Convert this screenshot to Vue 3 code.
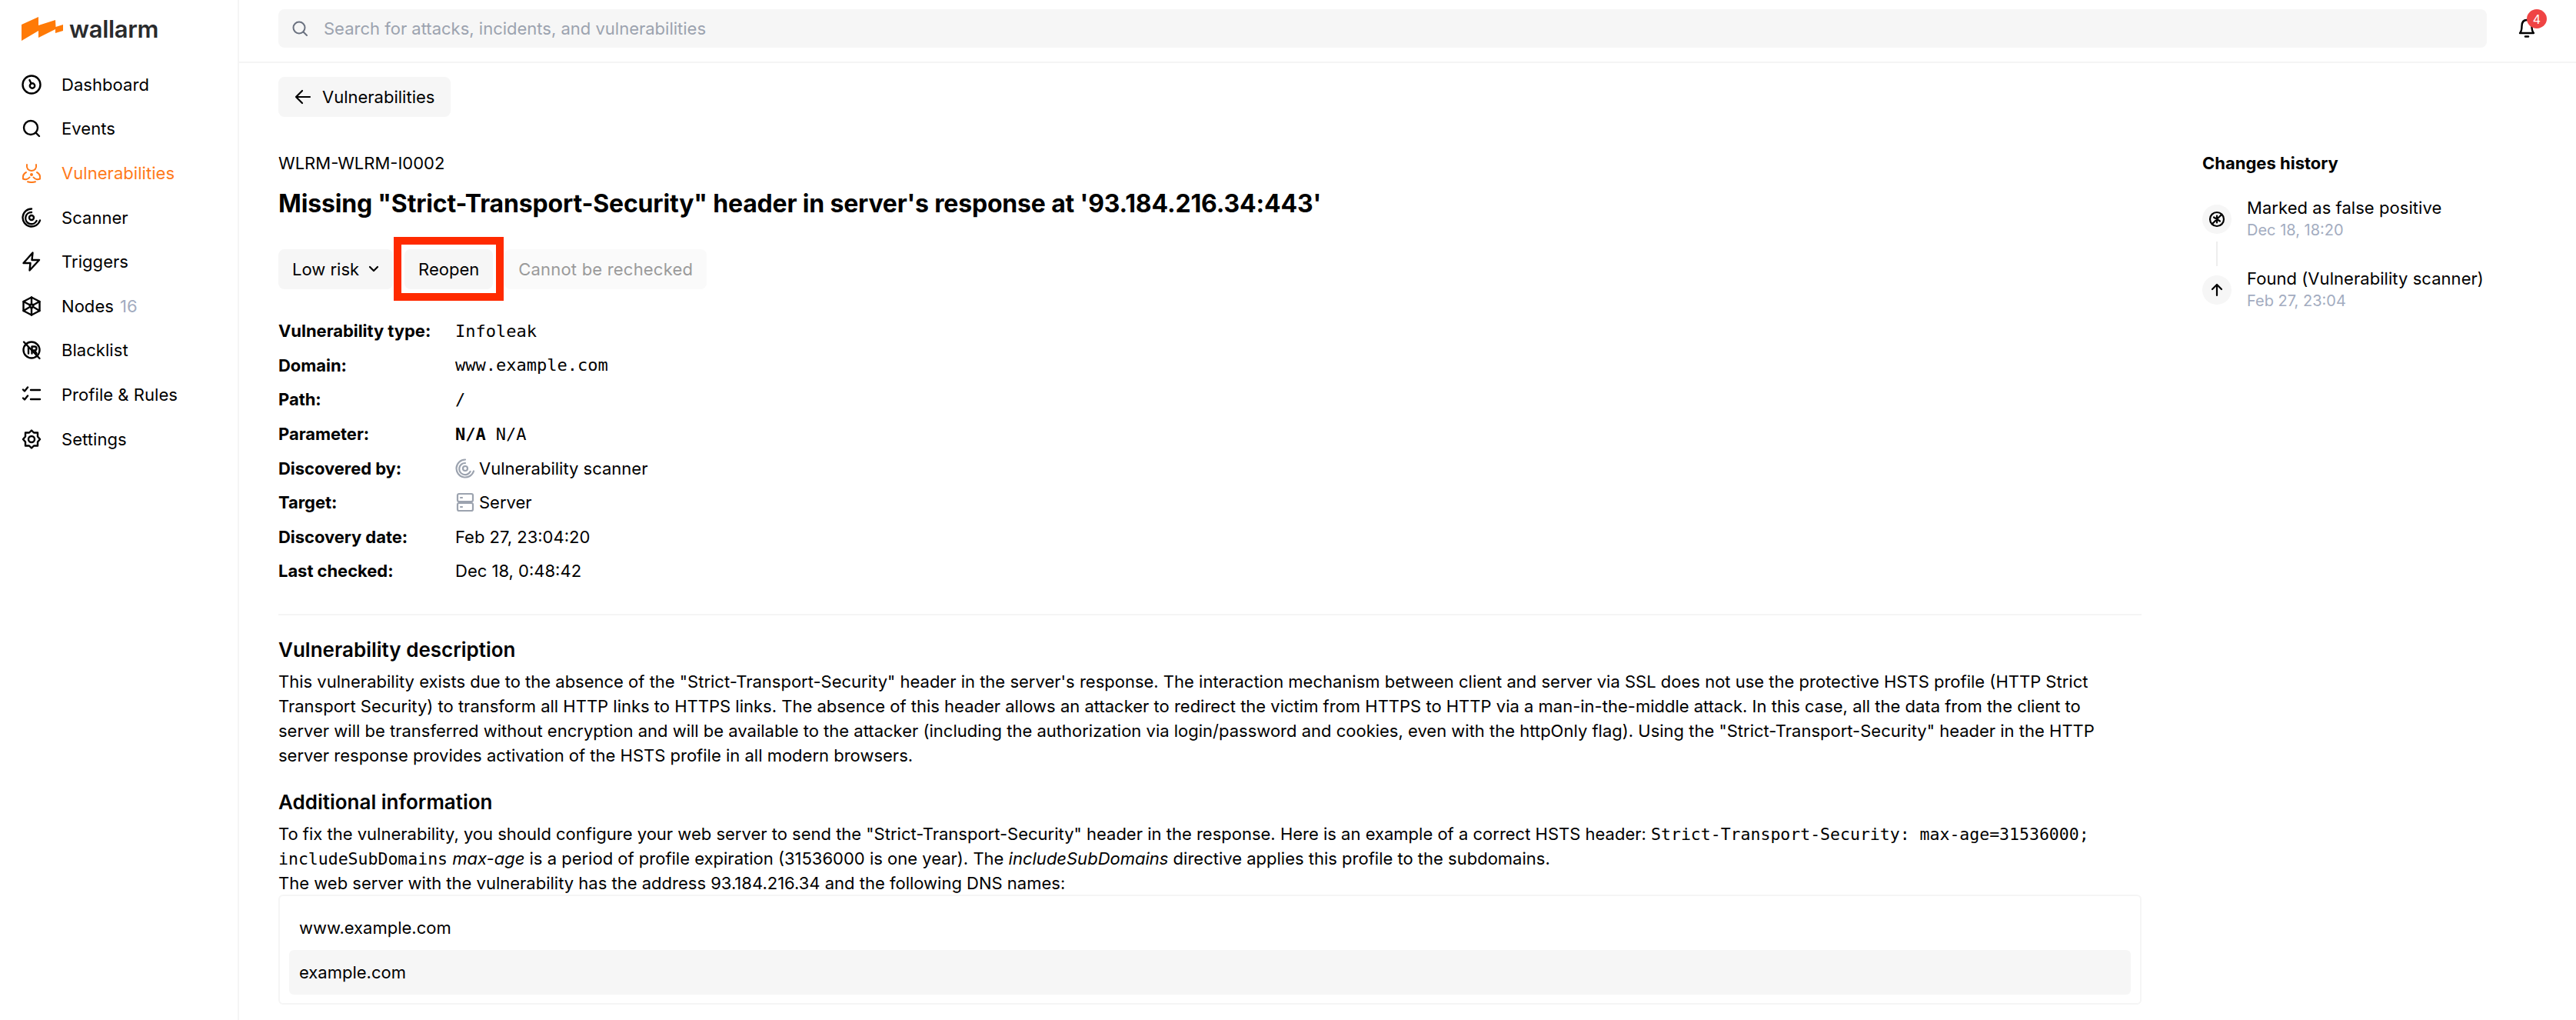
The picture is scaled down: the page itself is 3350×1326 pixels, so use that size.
<script setup>
const navItems = [
  { name: 'Dashboard', icon: 'dashboard' },
  { name: 'Events', icon: 'events' },
  { name: 'Vulnerabilities', icon: 'vuln', active: true },
  { name: 'Scanner', icon: 'scanner' },
  { name: 'Triggers', icon: 'triggers' },
  { name: 'Nodes', icon: 'nodes', count: 16 },
  { name: 'Blacklist', icon: 'blacklist' },
  { name: 'Profile & Rules', icon: 'profile' },
  { name: 'Settings', icon: 'settings' }
]
</script>

<template>
  <div class="page">
    <aside class="sidebar">
      <div class="logo">
        <svg width="56" height="34" viewBox="28 21 56 34">
          <polygon fill="#ff7a06" points="28,32 50,22 50,33 72,26 72.5,35 82,32 82,40 72,43 72,38 50,49 50,40 28,53" />
        </svg>
        <span class="logo-text">wallarm</span>
      </div>
      <nav>
        <a v-for="item in navItems" :key="item.name" class="nav-item" :class="{ active: item.active }">
          <svg class="nav-icon" width="26" height="26" viewBox="0 0 26 26" fill="none" stroke="currentColor" :stroke-width="item.icon === 'vuln' ? 2 : 2.4" stroke-linecap="round" stroke-linejoin="round">
            <template v-if="item.icon === 'dashboard'">
              <circle cx="13" cy="13" r="11.5" />
              <circle cx="14" cy="14.5" r="3.2" />
              <path d="M12.6 11.6 10.4 7" />
            </template>
            <template v-else-if="item.icon === 'events'">
              <circle cx="12" cy="12" r="9" />
              <path d="M18.6 18.6 23 23" />
            </template>
            <template v-else-if="item.icon === 'vuln'">
              <circle cx="13" cy="15" r="1" />
              <path d="M7 2C6 7 9 10 13 10S20 7 19 2" />
              <path d="M6 12C3 13.500 1.500 17 2 20.500c3 1.500 6.500.5 8.500-2" />
              <path d="M20 12c3 1.500 4.500 5 4 8.500-3 1.500-6.500.5-8.500-2" />
              <path d="M8 24.200c3 1 7 1 10 0" />
            </template>
            <template v-else-if="item.icon === 'scanner'">
              <path d="M24 16.5A11.5 11.5 0 1 1 13 1.5" />
              <path d="M19.6 17A7.6 7.6 0 1 1 13 6" />
              <circle cx="13" cy="13" r="3" />
            </template>
            <template v-else-if="item.icon === 'triggers'">
              <path d="M14.5 1.5 2.5 15h9l-1 9.5L23 11h-9.5z" />
            </template>
            <template v-else-if="item.icon === 'nodes'">
              <path d="M13 1.5 23.5 7v12L13 24.5 2.5 19V7z" />
              <path d="M13 1.5v8M13 16.5v8M2.5 7 10 11M23.5 7 16 11M2.5 19l7.5-4.5M23.5 19 16 14.5M10 11l3 5.5 3-5.500z" />
            </template>
            <template v-else-if="item.icon === 'blacklist'">
              <circle cx="13" cy="13" r="10.5" />
              <path d="M3 2.500 23.500 24" />
              <path d="M9 9.500v8M13.500 17.500V8.500h3.500a2.500 2.500 0 0 1 0 5h-3.500M17 13.500l2.500 4" />
            </template>
            <template v-else-if="item.icon === 'profile'">
              <path d="M2 6.500 4 8.500 8 3.500M2 17.500l2 2 4-5M12 7h12M12 19h12" />
            </template>
            <template v-else>
              <path d="M13 1.500 16 4.500h5v5l3 3.500-3 3.500v5h-5l-3 3-3-3H5v-5L2 13l3-3.500v-5h5z" />
              <circle cx="13" cy="13" r="4" />
            </template>
          </svg>
          <span>{{ item.name }}</span>
          <span v-if="item.count" class="nav-count">{{ item.count }}</span>
        </a>
      </nav>
    </aside>

    <div class="main">
      <header class="topbar">
        <div class="search">
          <svg width="24" height="24" viewBox="0 0 24 24" fill="none" stroke="#6b7280" stroke-width="2" stroke-linecap="round">
            <circle cx="11" cy="11" r="7.500" />
            <path d="M16.500 16.500 21 21" />
          </svg>
          <span>Search for attacks, incidents, and vulnerabilities</span>
        </div>
        <div class="bell">
          <svg width="24" height="26" viewBox="0 0 24 26" fill="none" stroke="#000" stroke-width="2.400" stroke-linecap="round" stroke-linejoin="round">
            <path d="M3 19c2-2 2.500-4 2.500-9 0-5 2.500-8 6.500-8s6.500 3 6.500 8c0 5 .5 7 2.500 9z" />
            <path d="M10 23.500h4" />
          </svg>
          <span class="badge">4</span>
        </div>
      </header>

      <div class="content">
        <section class="detail">
          <button class="btn back-btn">
            <svg width="22" height="22" viewBox="0 0 22 22" fill="none" stroke="#000" stroke-width="2.200" stroke-linecap="round" stroke-linejoin="round">
              <path d="M20 11H2M10 3l-8 8 8 8" />
            </svg>
            Vulnerabilities
          </button>

          <div class="vuln-id">WLRM-WLRM-I0002</div>
          <h1 class="title">Missing "Strict-Transport-Security" header in server's response at '93.184.216.34:443'</h1>

          <div class="actions">
            <button class="btn">
              Low risk
              <svg width="14" height="10" viewBox="0 0 14 10" fill="none" stroke="#000" stroke-width="2.200" stroke-linecap="round" stroke-linejoin="round">
                <path d="M2 2l5 5 5-5" />
              </svg>
            </button>
            <div class="highlighted">
              <button class="btn">Reopen</button>
              <span class="red-frame"></span>
            </div>
            <button class="btn disabled">Cannot be rechecked</button>
          </div>

          <dl class="facts">
            <dt>Vulnerability type:</dt>
            <dd class="mono">Infoleak</dd>
            <dt>Domain:</dt>
            <dd class="mono">www.example.com</dd>
            <dt>Path:</dt>
            <dd class="mono">/</dd>
            <dt>Parameter:</dt>
            <dd class="mono"><b>N/A</b> N/A</dd>
            <dt>Discovered by:</dt>
            <dd>
              <svg width="26" height="26" viewBox="0 0 26 26" fill="none" stroke="#9ca3af" stroke-width="2.200" stroke-linecap="round">
                <path d="M24 16.500A11.500 11.500 0 1 1 13 1.500" />
                <path d="M19.600 17A7.600 7.600 0 1 1 13 6" />
                <circle cx="13" cy="13" r="3" />
              </svg>
              Vulnerability scanner
            </dd>
            <dt>Target:</dt>
            <dd>
              <svg width="26" height="26" viewBox="0 0 26 26" fill="none" stroke="#9ca3af" stroke-width="2.200" stroke-linecap="round">
                <rect x="3" y="2" width="20" height="10" rx="2" />
                <rect x="3" y="14" width="20" height="10" rx="2" />
                <path d="M7 7h2M7 19h2" />
              </svg>
              Server
            </dd>
            <dt>Discovery date:</dt>
            <dd>Feb 27, 23:04:20</dd>
            <dt>Last checked:</dt>
            <dd>Dec 18, 0:48:42</dd>
          </dl>

          <hr class="divider" />

          <h2>Vulnerability description</h2>
          <p>This vulnerability exists due to the absence of the "Strict-Transport-Security" header in the server's response. The interaction mechanism between client and server via SSL does not use the protective HSTS profile (HTTP Strict<br />Transport Security) to transform all HTTP links to HTTPS links. The absence of this header allows an attacker to redirect the victim from HTTPS to HTTP via a man-in-the-middle attack. In this case, all the data from the client to<br />server will be transferred without encryption and will be available to the attacker (including the authorization via login/password and cookies, even with the httpOnly flag). Using the "Strict-Transport-Security" header in the HTTP<br />server response provides activation of the HSTS profile in all modern browsers.</p>

          <h2>Additional information</h2>
          <p>To fix the vulnerability, you should configure your web server to send the "Strict-Transport-Security" header in the response. Here is an example of a correct HSTS header: <code>Strict-Transport-Security: max-age=31536000;</code><br /><code>includeSubDomains</code> <em>max-age</em> is a period of profile expiration (31536000 is one year). The <em>includeSubDomains</em> directive applies this profile to the subdomains.<br />The web server with the vulnerability has the address 93.184.216.34 and the following DNS names:</p>

          <div class="dns-list">
            <div class="dns-row">www.example.com</div>
            <div class="dns-row striped">example.com</div>
          </div>
        </section>

        <aside class="history">
          <h3>Changes history</h3>
          <div class="history-item">
            <span class="history-icon">
              <svg width="22" height="22" viewBox="0 0 22 22" fill="none" stroke="#000" stroke-width="2.200" stroke-linecap="round">
                <circle cx="11" cy="11" r="9" />
                <path d="M5 17 17 5M11 6.500v9M7 8.500l8 5" />
              </svg>
            </span>
            <div>
              <div class="history-title">Marked as false positive</div>
              <div class="history-date">Dec 18, 18:20</div>
            </div>
          </div>
          <div class="history-line"></div>
          <div class="history-item">
            <span class="history-icon">
              <svg width="18" height="18" viewBox="0 0 18 18" fill="none" stroke="#000" stroke-width="2.200" stroke-linecap="round" stroke-linejoin="round">
                <path d="M9 16V2M3 8l6-6 6 6" />
              </svg>
            </span>
            <div>
              <div class="history-title">Found (Vulnerability scanner)</div>
              <div class="history-date">Feb 27, 23:04</div>
            </div>
          </div>
        </aside>
      </div>
    </div>
  </div>
</template>

<style>
html, body { margin: 0; background: #fff; }
</style>

<style scoped>
.page { display: flex; height: 100vh; overflow: hidden; font-family: Inter, "Liberation Sans", sans-serif; font-size: 22px; color: #000; }

.sidebar { width: 309px; flex: none; border-right: 2px solid #f5f5f5; }
.logo { height: 81px; display: flex; align-items: center; gap: 8px; padding-left: 28px; box-sizing: border-box; }
.logo svg { margin-top: -6px; flex: none; margin-right: -2px; }
.logo-text { font-family: Inter, sans-serif; font-size: 31px; font-weight: 600; color: #2a2b2d; letter-spacing: -0.3px; margin-top: -6px; }
.nav-item { height: 57.6px; display: flex; align-items: center; padding-left: 28px; letter-spacing: 0.05px; }
.nav-item.active { color: #ff7a1a; }
.nav-icon { flex: none; margin-right: 26px; }
.nav-count { color: #a3acc0; margin-left: 8px; }

.main { flex: 1; min-width: 0; display: flex; flex-direction: column; }
.topbar { height: 80px; flex: none; display: flex; align-items: center; padding-left: 51px; border-bottom: 2px solid #f5f5f5; }
.search { width: 2872px; height: 50px; margin-top: -6px; box-sizing: border-box; padding-left: 16px; display: flex; align-items: center; gap: 19px; background: #f6f6f6; border-radius: 8px; color: #9ca3af; }
.bell { position: relative; margin-left: 40px; margin-top: -6px; }
.bell svg { display: block; }
.badge { position: absolute; top: -12px; left: 12px; width: 26px; height: 25px; border-radius: 50%; background: #ef4444; color: #fff; font-size: 16px; display: flex; align-items: center; justify-content: center; }

.content { display: flex; padding: 18px 0 0 51px; }
.detail { width: 2423px; flex: none; }
.history { margin-left: 79px; padding-top: 94px; }

.btn { height: 52px; display: inline-flex; align-items: center; gap: 12px; padding: 0 18px; background: #f6f6f6; border: none; border-radius: 8px; font: inherit; color: #000; }
.back-btn { gap: 14px; padding: 0 21px; }
.back-btn svg { flex: none; }
.vuln-id { margin-top: 44px; line-height: 32px; }
.title { margin: 15px 0 37px; font-size: 32px; line-height: 44px; font-weight: 700; letter-spacing: -0.17px; }

.actions { display: flex; gap: 15px; }
.highlighted { position: relative; }
.red-frame { position: absolute; left: -14px; top: -16px; right: -14px; bottom: -15px; border: 10px solid #ff2a00; }
.btn.disabled { background: #fafafa; color: #9a9a9a; letter-spacing: 0.2px; }

.facts { display: grid; grid-template-columns: 230px 1fr; grid-auto-rows: 44.6px; margin: 32px 0 33px; align-items: center; }
.facts dt { font-weight: 700; letter-spacing: -0.05px; }
.facts dd { margin: 0; display: flex; align-items: center; gap: 5px; }
.mono { font-family: "DejaVu Sans Mono", "Liberation Mono", monospace; font-size: 22px; }
.mono b { margin-right: 8px; }
code { font-family: "DejaVu Sans Mono", "Liberation Mono", monospace; font-size: 21.5px; line-height: 1; }

.divider { margin: 0; border: none; border-top: 2px solid #f5f5f5; }
h2 { margin: 27px 0 7px; font-size: 26px; line-height: 36px; font-weight: 600; }
p { margin: 0; line-height: 32px; white-space: nowrap; }

.dns-list { border: 2px solid #f5f5f5; border-radius: 6px; padding: 12px; height: 143px; box-sizing: border-box; margin-top: -1px; }
.dns-row { height: 58px; display: flex; align-items: center; padding-left: 13px; border-radius: 6px; }
.dns-row.striped { background: #f6f6f6; }

h3 { margin: 0 0 26px; font-size: 22px; line-height: 36px; font-weight: 700; }
.history-item { display: flex; align-items: center; gap: 20px; }
.history-icon { width: 38px; height: 38px; border-radius: 50%; background: #f6f6f6; display: flex; align-items: center; justify-content: center; flex: none; }
.history-title { line-height: 28px; letter-spacing: 0.05px; }
.history-date { line-height: 30px; font-size: 20px; color: #a3acc0; }
.history-line { width: 2px; height: 32px; background: #eee; margin: 0 0 2px 18px; }
</style>
